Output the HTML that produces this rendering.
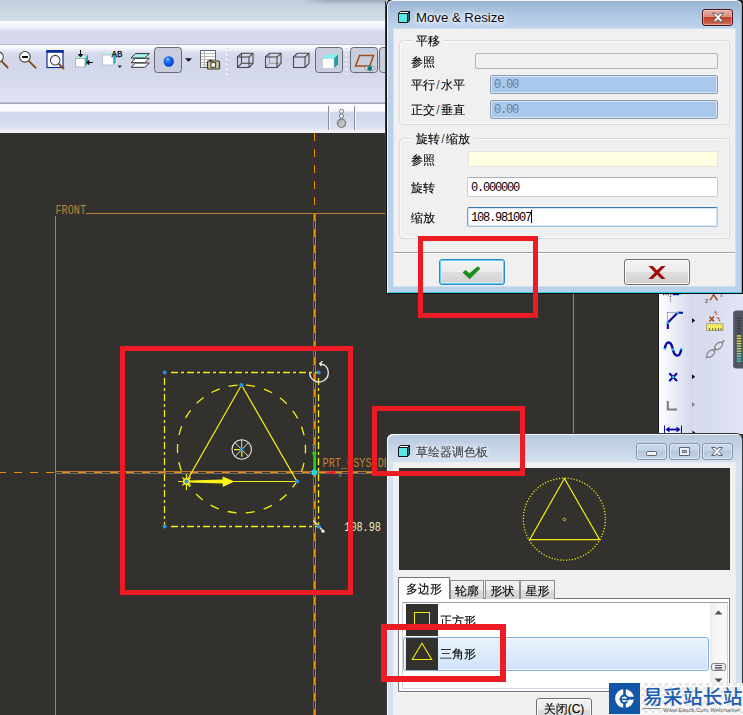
<!DOCTYPE html>
<html lang="zh-CN">
<head>
<meta charset="utf-8">
<title>Move &amp; Resize</title>
<style>
html,body{margin:0;padding:0;}
body{width:743px;height:715px;overflow:hidden;position:relative;background:#32312d;font-family:"Liberation Sans","Noto Sans CJK SC",sans-serif;font-size:12px;color:#000;}
.abs{position:absolute;}
#topbar{left:0;top:0;width:388px;height:133px;background:#d4d8eb;}
#tb0{left:0;top:0;width:388px;height:21px;background:linear-gradient(#c2cddb,#d3deea);}
#tb1{left:0;top:21px;width:388px;height:23px;background:linear-gradient(#fcfcff 0,#f3f4fb 6px,#e0e3f2 9px,#d7daed 11px,#d5d8ec 100%);}
#tb2{left:0;top:44px;width:388px;height:58px;background:linear-gradient(#b9bdcd 0,#b9bdcd 1px,#fbfbfe 1px,#fbfbfe 3px,#d9dcee 9px,#d3d7ea 14px,#d4d8eb 30px,#dfe2f2 56px,#e2e5f4 58px);}
#tb3{left:0;top:102px;width:388px;height:31px;background:linear-gradient(#b9bdcc 0,#b9bdcc 1px,#a2a6b4 1px,#a2a6b4 2px,#fbfcfe 2px,#f8f9fd 9px,#d4dbed 10.500px,#cfd7eb 12px,#d6dcee 20px,#dfe3f2 27px,#eeeef2 28px,#f0f0f3 31px);}
.lbl{position:absolute;white-space:nowrap;font-size:12px;line-height:14px;color:#000;}
</style>
</head>
<body>
<!-- top toolbars -->
<div id="topbar" class="abs"></div>
<div id="tb0" class="abs"></div>
<div id="tb1" class="abs"></div>
<div id="tb2" class="abs"></div>
<div id="tb3" class="abs"></div>
<div class="abs" style="left:300px;top:0;width:86px;height:5px;background:linear-gradient(rgba(110,120,135,.45),rgba(110,120,135,0));-webkit-mask-image:linear-gradient(90deg,transparent 0,#000 30px);mask-image:linear-gradient(90deg,transparent 0,#000 30px);"></div>
<!--TOOLBAR-ICONS-->
<svg class="abs" style="left:0;top:44px" width="388" height="90" viewBox="0 44 388 90" fill="none">
<defs>
<radialGradient id="sph" cx=".4" cy=".35" r=".7"><stop offset="0" stop-color="#5aa0ff"/><stop offset=".5" stop-color="#0a5cf0"/><stop offset="1" stop-color="#0640c0"/></radialGradient>
</defs>
<!-- pressed buttons -->
<g fill="#c9cddd" stroke="#666a78" stroke-width="1">
<rect x="154.500" y="47.500" width="27" height="25" rx="3"/>
<rect x="315.500" y="47.500" width="27" height="25" rx="3"/>
<rect x="350.500" y="47.500" width="27" height="25" rx="3"/>
<rect x="379.500" y="47.500" width="27" height="25" rx="3"/>
</g>
<!-- zoom in (partial) -->
<circle cx="-2" cy="57" r="5.300" fill="#fff" stroke="#444" stroke-width="1.100"/>
<path d="M1.800 61.300L7.600 67.500" stroke="#8a4a1a" stroke-width="1.900" stroke-linecap="round"/>
<!-- zoom out -->
<circle cx="24.900" cy="56.800" r="5.300" fill="#fff" stroke="#444" stroke-width="1.100"/>
<path d="M22 57H28" stroke="#111" stroke-width="2"/>
<path d="M29.200 61.300L35.500 67.700" stroke="#8a4a1a" stroke-width="1.900" stroke-linecap="round"/>
<!-- window zoom -->
<rect x="47" y="51" width="16" height="16.500" fill="#fff" stroke="#0a2a9a" stroke-width="1.200"/>
<rect x="46.400" y="50" width="17.200" height="2.800" fill="#0a2a9a"/>
<circle cx="55.200" cy="60.200" r="4.800" fill="#f4f6ff" stroke="#444" stroke-width="1.100"/>
<path d="M58.800 64L63.500 68.500" stroke="#8a4a1a" stroke-width="1.900" stroke-linecap="round"/>
<!-- box with arrows -->
<path d="M75.500 58.500L78.500 55H88L85 58.500Z" fill="#b4f2f2" stroke="#9aa" stroke-width=".6"/>
<path d="M85 58.500L88 55V63.500L85 67Z" fill="#22a6a6"/>
<rect x="75.500" y="58.500" width="9.500" height="8.500" fill="#fff" stroke="#aaa" stroke-width=".8"/>
<path d="M80.500 50V56M78.500 54.500L80.500 57L82.500 54.500Z" stroke="#111" stroke-width="1" fill="#111"/>
<path d="M93 62.500H87.500M89 60.500L86.500 62.500L89 64.500Z" stroke="#111" stroke-width="1" fill="#111"/>
<!-- box AB -->
<path d="M102.500 55L105 52.500H115L113 55Z" fill="#b4f2f2"/>
<path d="M113.200 55L115.500 52.500V62.500L113.200 65Z" fill="#22a6a6" stroke-dasharray="1 1"/>
<rect x="102.500" y="55" width="10.700" height="10" fill="#fff" stroke="#b0b0b8" stroke-width=".7"/>
<text x="111.600" y="56.600" font-family="'Liberation Mono',monospace" font-size="9.200" font-weight="400" fill="#000" stroke="#000" stroke-width=".25" textLength="10.800" lengthAdjust="spacingAndGlyphs">AB</text>
<path d="M117.500 65.500H122L119.700 68Z" fill="#222"/>
<!-- layers -->
<path d="M131 67.300L135.500 63H149.300L144.800 67.300Z" fill="#fff" stroke="#333" stroke-width="1"/>
<path d="M131 62.700L135.500 58.300H149.300L144.800 62.700Z" fill="#fff" stroke="#333" stroke-width="1"/>
<path d="M131 58L135.500 53.600H149.300L144.800 58Z" fill="#a4f2f2" stroke="#333" stroke-width="1"/>
<!-- sphere -->
<circle cx="168.800" cy="61.500" r="5.200" fill="url(#sph)"/>
<path d="M166.800 59.500L167.800 57.800L168.900 59.500Z" fill="#e8f2ff"/>
<path d="M185 58.200H192L188.500 61.800Z" fill="#111"/>
<!-- table + camera -->
<rect x="200.500" y="50.500" width="15" height="17" fill="#fff" stroke="#666" stroke-width="1"/>
<path d="M201 53.500H215M201 56.500H215M201 59.500H215M201 62.500H215M201 65H215M204.500 51V67" stroke="#aaa" stroke-width=".8"/>
<rect x="207.500" y="61" width="12" height="8" rx="1" fill="#c8c4a0" stroke="#3a3a20" stroke-width="1.200"/>
<rect x="209" y="59.800" width="3.500" height="1.600" fill="#3a3a20"/>
<rect x="211" y="62.700" width="4.600" height="4.600" fill="#fff" stroke="#3a3a20" stroke-width="1"/>
<!-- grips -->
<g fill="#fdfdff"><rect x="226" y="48.500" width="2" height="2"/><rect x="226" y="53.300" width="2" height="2"/><rect x="226" y="58.200" width="2" height="2"/><rect x="226" y="63" width="2" height="2"/><rect x="226" y="67.900" width="2" height="2"/><rect x="226" y="72.700" width="2" height="2"/>
<rect x="345.500" y="48.500" width="2" height="2"/><rect x="345.500" y="53.300" width="2" height="2"/><rect x="345.500" y="58.200" width="2" height="2"/><rect x="345.500" y="63" width="2" height="2"/><rect x="345.500" y="67.900" width="2" height="2"/><rect x="345.500" y="72.700" width="2" height="2"/></g>
<g fill="#a4a8b8"><rect x="227" y="48" width="1" height="1"/><rect x="227" y="52.800" width="1" height="1"/><rect x="227" y="57.700" width="1" height="1"/><rect x="227" y="62.500" width="1" height="1"/><rect x="227" y="67.400" width="1" height="1"/><rect x="227" y="72.200" width="1" height="1"/>
<rect x="346.500" y="48" width="1" height="1"/><rect x="346.500" y="52.800" width="1" height="1"/><rect x="346.500" y="57.700" width="1" height="1"/><rect x="346.500" y="62.500" width="1" height="1"/><rect x="346.500" y="67.400" width="1" height="1"/><rect x="346.500" y="72.200" width="1" height="1"/></g>
<!-- wireframe cube -->
<g stroke="#4a4a4a" stroke-width="1.100">
<rect x="237.500" y="57" width="11.500" height="10.500"/><rect x="241.500" y="53.300" width="11.500" height="10"/>
<path d="M237.500 57L241.500 53.300M249 57L253 53.300M237.500 67.500L241.500 63.300M249 67.500L253 63.300"/>
</g>
<!-- hidden-line cube -->
<g stroke="#a89c90" stroke-width="1"><path d="M269.500 53.500V63.300H281M265.500 67.500L269.500 63.300"/></g>
<g stroke="#4a4a4a" stroke-width="1.100">
<rect x="265.500" y="57" width="11.500" height="10.500"/>
<path d="M265.500 57L269.500 53.300H281V63.300L277 67.500M277 57L281 53.300"/>
</g>
<!-- no-hidden cube -->
<g stroke="#4a4a4a" stroke-width="1.100">
<rect x="293.500" y="57" width="11.500" height="10.500"/>
<path d="M293.500 57L297.500 53.300H309V63.300L305 67.500M305 57L309 53.300"/>
</g>
<!-- shaded cube -->
<path d="M322.500 58.500L326.500 54.500H338L334 58.500Z" fill="#7ef4f4"/>
<path d="M334 58.500L338 54.500V64.300L334 68.300Z" fill="#1f9e9e"/>
<rect x="322.500" y="58.500" width="11.500" height="9.800" fill="#fff" stroke="#b8bcc8" stroke-width=".6"/>
<!-- datum plane + eye -->
<path d="M359.600 55.500H373.500L369.800 66H355.500Z" stroke="#a24c12" stroke-width="1.500" stroke-linejoin="miter"/>
<path d="M364.500 68.300C367 65 372.500 65 375 68.300C372.500 71.500 367 71.500 364.500 68.300Z" fill="#f4f4f4" stroke="#555" stroke-width=".6"/>
<circle cx="369.800" cy="68.300" r="2.500" fill="#149090"/><circle cx="369.800" cy="68.300" r="1" fill="#0a3a3a"/>
<!-- status bar -->
<path d="M328.500 106V130M354.500 106V130" stroke="#8e8e96" stroke-width="1"/>
<path d="M329.500 106V130M355.500 106V130" stroke="#f4f5fa" stroke-width="1"/>
<g stroke="#7c7c7c" stroke-width="1"><circle cx="341.500" cy="111.300" r="2.100" fill="#eef0f8"/><circle cx="341.500" cy="116" r="2.100" fill="#eef0f8"/><circle cx="341.500" cy="123.200" r="4.100" fill="#b4b4b8" stroke-width="1.300"/><path d="M339 125.700L344 120.700M340.500 127L345 122.300" stroke="#e8e8ee" stroke-width=".7"/></g>
</svg>
<!--/TOOLBAR-ICONS-->
<!--CANVAS-->
<svg class="abs" style="left:0;top:0" width="743" height="715" viewBox="0 0 743 715">
<g shape-rendering="crispEdges" fill="none">
  <!-- FRONT datum plane outline -->
  <line x1="86" y1="213.5" x2="386" y2="213.5" stroke="#bd7d33" stroke-width="1"/>
  <line x1="55.5" y1="216" x2="55.5" y2="715" stroke="#bd7d33" stroke-width="1"/>
  <line x1="573.5" y1="293" x2="573.5" y2="433" stroke="#bd7d33" stroke-width="1"/>
  <!-- vertical centre axis -->
  <line x1="313.5" y1="213" x2="313.5" y2="715" stroke="#6c6c6a" stroke-width="1"/>
  <line x1="315.5" y1="213" x2="315.5" y2="715" stroke="#b97a30" stroke-width="1"/>
  <line x1="314.5" y1="133" x2="314.5" y2="715" stroke="#f28c05" stroke-width="1.6" stroke-dasharray="8 8"/>
  <!-- horizontal centre axis -->
  <line x1="55" y1="471.5" x2="400" y2="471.5" stroke="#b97a30" stroke-width="1"/>
  <line x1="55" y1="473.5" x2="400" y2="473.5" stroke="#6c6c6a" stroke-width="1"/>
  <line x1="-2" y1="472.5" x2="400" y2="472.5" stroke="#f28c05" stroke-width="1.6" stroke-dasharray="8 8"/>
</g>
<!-- sketch entities -->
<g fill="none" stroke="#f4ee10" stroke-width="1.3">
  <path d="M171 372.5H319" stroke-dasharray="7 3 3 3"/>
  <path d="M164.5 378V526" stroke-dasharray="7 3 3 3"/>
  <path d="M171 526.5H319" stroke-dasharray="7 3 3 3"/>
  <path d="M318.5 378V526" stroke-dasharray="7 3 3 3"/>
  <circle cx="241.5" cy="449" r="64" stroke-dasharray="9 9.28" stroke-dashoffset="-4.6" transform="rotate(-90 241.5 449)"/>
  <path d="M241.5 385L186.5 481.5H297L241.5 385Z" stroke-width="1.2"/>
</g>
<!-- direction arrow -->
<path d="M188 480.500L222.700 479.400V476.500L234.500 481.600L222.700 487V483.600L188 482.600Z" fill="#fbf315"/>
<!-- sun marker -->
<g stroke="#f4ee10" stroke-width="1.2" fill="none">
  <path d="M178 481.500H193M186.500 474V490M182.300 477.300L190.700 485.700M190.700 477.300L182.300 485.700"/>
</g>
<circle cx="186.5" cy="481.5" r="3.6" fill="#f6f012"/>
<!-- centre marker -->
<g stroke="#e8e8e8" stroke-width="1.1" fill="none">
  <circle cx="241.7" cy="449.5" r="9.7"/>
  <path d="M235 442.700L248.500 456.500M248.500 442.700L235 456.500M241.700 440V449" stroke-width=".9"/>
</g>
<path d="M234 449.600H241.500M241.800 450V456.800" stroke="#f4ee10" stroke-width="1.300"/>
<!-- rotate handle -->
<path d="M309.700 373A9.300 9.300 0 1 0 324 364.800L320 363.800M322.600 361.300L319.700 363.700L321.400 366" stroke="#eeeeee" stroke-width="1.300" fill="none"/>
<!-- scale handle -->
<path d="M313.5 520.5L323 531" stroke="#e6e6e6" stroke-width="1.4"/>
<circle cx="323" cy="531.2" r="1.6" fill="#f0f0f0"/>
<!-- csys -->
<path d="M314.5 472V454" stroke="#22d022" stroke-width="1.4"/>
<circle cx="314.3" cy="453.3" r="2" fill="#22d022"/>
<path d="M326 472.400H333" stroke="#ee1c24" stroke-width="1.600"/>
<circle cx="333.4" cy="472.5" r="2" fill="#ee1c24"/>
<circle cx="314.400" cy="472.400" r="3" fill="#20d8e8"/>
<!-- vertex dots -->
<g fill="#2b8fe0">
  <circle cx="164.7" cy="372.6" r="2"/><circle cx="318.7" cy="372.6" r="2"/>
  <circle cx="164.7" cy="526.4" r="2"/><circle cx="318.7" cy="526.4" r="2"/>
  <circle cx="241.5" cy="385.2" r="2.1"/><circle cx="297.2" cy="481.5" r="2.1"/>
  <circle cx="186.5" cy="481.5" r="2"/><circle cx="241.7" cy="449.5" r="1.7"/>
</g>
<!-- labels -->
<g font-family="'Liberation Mono',monospace" fill="#c08438">
  <text x="55.500" y="214" font-size="13.600" textLength="30.500" lengthAdjust="spacingAndGlyphs" font-weight="400">FRONT</text>
  <text x="322.500" y="467" font-size="13.600" textLength="67.500" lengthAdjust="spacingAndGlyphs">PRT_CSYS_DE</text>
  <text x="344.300" y="531" font-size="13.600" textLength="36.500" lengthAdjust="spacingAndGlyphs" fill="#f0f0c0">108.98</text>
  <text x="338" y="477" font-size="7" fill="#8a8a88">x</text>
  <text x="312" y="448" font-size="7" fill="#8a8a88">y</text>
</g>
</svg>
<!--/CANVAS-->
<!--RIGHTBAR-->
<div class="win" style="left:658px;top:293px;width:1px;height:141px;background:#15171a;"></div>
<div class="win" style="left:659px;top:293px;width:84px;height:141px;background:linear-gradient(90deg,#ffffff 0,#f0f2fa 12px,#dde0f1 26px,#d3d7ec 33px,#d9dcef 34px,#d8dcef 50px,#e2e5f5 84px);"></div>
<svg class="abs" style="left:659px;top:293px" width="84" height="141" viewBox="659 293 84 141" fill="none">
<!-- partially hidden top icons -->
<path d="M663 294.500H672" stroke="#555" stroke-width="1.400" stroke-dasharray="1.200 1.200"/><path d="M670.500 296V301.500" stroke="#555" stroke-width="1.400" stroke-dasharray="1.200 1.200"/><path d="M672.700 294.200H679" stroke="#0a0aa0" stroke-width="2"/><path d="M679 294.200H680.800" stroke="#20e0f8" stroke-width="2"/>
<path d="M710 300.500L713.600 294.500L717.500 300.500" stroke="#a04810" stroke-width="1.400"/>
<text x="704.800" y="302.600" font-family="'Liberation Sans',sans-serif" font-size="7.500" fill="#555" stroke="none">z</text>
<text x="720" y="297" font-family="'Liberation Sans',sans-serif" font-size="6" fill="#666" stroke="none">x</text>
<!-- arc tool -->
<path d="M667.500 312.500H677M667.500 312.500V322" stroke="#666" stroke-width="1" stroke-dasharray="1 1"/>
<path d="M683 312.800H677.600L667.800 322.800V329" stroke="#0a0aa0" stroke-width="2.100" stroke-linejoin="miter"/>
<rect x="676.600" y="311.800" width="2" height="2" fill="#20e0f8"/><rect x="666.800" y="321.800" width="2" height="2" fill="#20e0f8"/>
<path d="M692 318L695.200 320.500L692 323Z" fill="#111"/>
<!-- spline tool -->
<path d="M664.800 349C666 340.300 671 340.300 672.800 349C674.600 357.800 680 357.800 681.300 348.800" stroke="#0a0aa0" stroke-width="2.400"/>
<rect x="663.800" y="348" width="2" height="2" fill="#20e0f8"/><rect x="671.800" y="348.500" width="2" height="2" fill="#20e0f8"/><rect x="680.300" y="347.800" width="2" height="2" fill="#20e0f8"/>
<!-- point tool -->
<path d="M669.300 373.300L677 381M677 373.300L669.300 381" stroke="#0a0aa0" stroke-width="2.200"/>
<rect x="672.100" y="376.100" width="2.200" height="2.200" fill="#20e0f8"/>
<path d="M692 374.300L695.200 376.800L692 379.300Z" fill="#111"/>
<!-- L tool -->
<path d="M667.800 401V409.500H677" stroke="#7c7c7c" stroke-width="2"/>
<path d="M692 402L695.200 404.500L692 407Z" fill="#8a8a8a"/>
<!-- dimension tool -->
<path d="M664.500 425.500V434M681.500 425.500V434" stroke="#0a0aa0" stroke-width="1"/>
<path d="M667 429.500H679" stroke="#0a0aa0" stroke-width="1.800"/><path d="M665.500 429.500L669.500 426.500V432.500ZM680.500 429.500L676.500 426.500V432.500Z" fill="#0a0aa0"/>
<path d="M692.500 430.500L695.500 433L692.500 435.500Z" fill="#111"/>
<!-- col 2 -->
<path d="M709.500 316.500L714 321.500M714 316.500L709.500 321.500" stroke="#a04810" stroke-width="1.500"/>
<path d="M715 311.500L716.800 314.500M717.800 317.500L719.800 320.800" stroke="#a04810" stroke-width="1.700" stroke-dasharray="1.600 1"/>
<rect x="706.500" y="323.800" width="16.500" height="6.700" fill="#ece450" stroke="#8a8a80" stroke-width=".7"/><path d="M707 325H723M707 327H723" stroke="#fcfab0" stroke-width="1" stroke-dasharray="1 1"/><path d="M709.500 328V330.500M712.500 328V330.500M715.500 328V330.500M718.500 328V330.500M721 328V330.500" stroke="#555" stroke-width=".8"/>
<g stroke="#858585" stroke-width="1.100"><ellipse cx="710.800" cy="353.500" rx="4.600" ry="2.700" transform="rotate(-42 710.800 353.500)"/><ellipse cx="718.500" cy="346" rx="4.600" ry="2.700" transform="rotate(-42 718.500 346)"/><path d="M713 351.200L716.300 348.200M705.800 358.200L707.800 356.300M721.600 343L724.300 340.300" stroke-width="1.600"/></g>
<!-- meter -->
<rect x="733" y="310.500" width="14" height="58" rx="3.500" fill="#50555f"/>
<path d="M733.500 314V365" stroke="#6d727c" stroke-width="1"/>
<rect x="736.800" y="317.6" width="4.400" height="1.300" fill="#3a3e46"/><rect x="736.800" y="320.1" width="4.400" height="1.300" fill="#3a3e46"/><rect x="736.800" y="322.7" width="4.400" height="1.300" fill="#3a3e46"/><rect x="736.800" y="325.2" width="4.400" height="1.300" fill="#3a3e46"/><rect x="736.800" y="327.7" width="4.400" height="1.300" fill="#3a3e46"/><rect x="736.800" y="330.2" width="4.400" height="1.300" fill="#3a3e46"/><rect x="736.800" y="332.8" width="4.400" height="1.300" fill="#3a3e46"/><rect x="736.800" y="335.3" width="4.400" height="1.300" fill="#e4da50"/><rect x="736.800" y="337.8" width="4.400" height="1.300" fill="#e4da50"/><rect x="736.800" y="340.4" width="4.400" height="1.300" fill="#e4da50"/><rect x="736.800" y="342.9" width="4.400" height="1.300" fill="#e4da50"/><rect x="736.800" y="345.4" width="4.400" height="1.300" fill="#b4dc70"/><rect x="736.800" y="348.0" width="4.400" height="1.300" fill="#b4dc70"/><rect x="736.800" y="350.5" width="4.400" height="1.300" fill="#b4dc70"/><rect x="736.800" y="353.0" width="4.400" height="1.300" fill="#70dca0"/><rect x="736.800" y="355.6" width="4.400" height="1.300" fill="#70dca0"/><rect x="736.800" y="358.1" width="4.400" height="1.300" fill="#38d8c8"/><rect x="736.800" y="360.6" width="4.400" height="1.300" fill="#38d8c8"/>
</svg>
<!--/RIGHTBAR-->
<!--DIALOG1-->
<style>
.win{position:absolute;box-sizing:border-box;}
.cjk{font-family:"Liberation Sans","WenQuanYi Zen Hei","Noto Sans CJK SC",sans-serif;-webkit-text-stroke:.12px currentColor;}
.mono{font-family:"Liberation Mono",monospace;letter-spacing:-1.2px;font-size:12px;}
.grp{position:absolute;box-sizing:border-box;border:1px solid #d3dde6;border-radius:4px;box-shadow:inset 0 0 0 1px #fbfbfb;}
.grp>span{position:absolute;top:-7px;left:12px;background:#f0f0f0;padding:0 4px;line-height:14px;font-size:12px;}
i{font-style:normal;display:inline-block;width:6px;text-align:center;color:#555;}
.fld{position:absolute;box-sizing:border-box;height:19px;line-height:18px;padding-left:3px;white-space:nowrap;}
.btn{position:absolute;box-sizing:border-box;border:1px solid #707070;border-radius:3px;background:linear-gradient(#f3f3f3 0,#ececec 48%,#dedede 52%,#d0d0d0 100%);box-shadow:inset 0 0 0 1px #fafafa;}
</style>
<div class="win" style="left:385px;top:1px;width:1px;height:292px;background:#3c3c3b;"></div>
<div id="dlg1" class="win" style="left:386px;top:-1px;width:357px;height:295px;background:#0c0e12;border-radius:7px 7px 0 0;"></div>
<div class="win" style="left:387px;top:0;width:355px;height:293px;border-radius:6px 6px 0 0;background:#f4f8fc;"></div>
<div class="win" style="left:741px;top:4px;width:1px;height:289px;background:#3ccbe2;"></div>
<div class="win" style="left:388px;top:292px;width:354px;height:1px;background:#3ccbe2;"></div>
<div class="win" style="left:388px;top:1px;width:353px;height:291px;border-radius:5px 5px 0 0;background:linear-gradient(#9ab3d0 0,#a6bfdc 8px,#b2cbe6 18px,#bed5ed 27px,#b9d1ea 40px,#b9d1ea 100%);"></div>
<!-- title -->
<svg class="abs" style="left:397px;top:10px" width="14" height="14" viewBox="0 0 14 14"><path d="M1.500 3.500H10.500V12.500H1.500Z" fill="#58e8e6" stroke="#151515" stroke-width="1" stroke-linejoin="round"/><path d="M1.500 3.500L3.300 1.500H12.500L10.500 3.500Z" fill="#f4fcfc" stroke="#151515" stroke-width="1" stroke-linejoin="round"/><path d="M10.500 3.500L12.500 1.500V10.700L10.500 12.500Z" fill="#2c6a6a" stroke="#151515" stroke-width="1" stroke-linejoin="round"/></svg>
<div class="lbl" style="left:416px;top:10px;font-size:13.200px;line-height:16px;color:#0a0a14;text-shadow:0 0 5px #fff,0 0 8px #fff,0 0 3px #fff;">Move &amp; Resize</div>
<!-- close button -->
<div class="win" style="left:702px;top:9px;width:31px;height:17px;border:1px solid #47121a;border-radius:3px;background:linear-gradient(#e9b0a4 0,#dc8a7c 45%,#c2432c 50%,#cc5c40 85%,#d87c60 100%);box-shadow:inset 0 0 0 1px rgba(255,255,255,.35);"></div>
<svg class="abs" style="left:711px;top:12px" width="14" height="11" viewBox="0 0 14 11"><path d="M1.500 1.200H4.800L7 3.600L9.200 1.200H12.500L8.800 5.500L12.500 9.800H9.200L7 7.400L4.800 9.800H1.500L5.200 5.500Z" fill="#fafafa" stroke="#5a5a66" stroke-width="1" stroke-linejoin="round"/></svg>
<!-- client -->
<div class="win cjk" id="cl1" style="left:394px;top:29px;width:341px;height:257px;background:#f0f0f0;box-shadow:0 0 0 1px #cfe0f1;"></div>
<div class="grp cjk" style="left:399px;top:40px;width:331px;height:85px;"><span>平移</span></div>
<div class="grp cjk" style="left:399px;top:138px;width:331px;height:101px;"><span>旋转<i>/</i>缩放</span></div>
<div class="lbl cjk" style="left:411px;top:55px;">参照</div>
<div class="lbl cjk" style="left:411px;top:78px;">平行<i>/</i>水平</div>
<div class="lbl cjk" style="left:411px;top:103px;">正交<i>/</i>垂直</div>
<div class="lbl cjk" style="left:411px;top:153px;">参照</div>
<div class="lbl cjk" style="left:411px;top:181px;">旋转</div>
<div class="lbl cjk" style="left:411px;top:211px;">缩放</div>
<div class="fld" style="left:475px;top:53px;width:243px;height:16px;background:#f0f0f0;border:1px solid #b4b4b4;border-radius:2px;"></div>
<div class="fld mono" style="left:490px;top:75px;width:228px;background:#a9c8ec;border:1px solid #8e9fb4;border-radius:2px;box-shadow:inset 0 0 0 1px #d6e4f4;color:#6a7f96;">0.00</div>
<div class="fld mono" style="left:490px;top:100px;width:228px;background:#a9c8ec;border:1px solid #8e9fb4;border-radius:2px;box-shadow:inset 0 0 0 1px #d6e4f4;color:#6a7f96;">0.00</div>
<div class="fld" style="left:468px;top:151px;width:250px;height:16px;background:#ffffe1;border:1px solid #e6e6dc;"></div>
<div class="fld mono" style="left:467px;top:177px;width:251px;height:20px;line-height:21px;background:#fff;border:1px solid #c9ccd2;border-top-color:#abadb3;border-radius:2px;">0.000000</div>
<div class="fld mono" style="left:467px;top:207px;width:251px;height:20px;line-height:21px;background:#fff;border:1px solid #a4c4e4;border-top-color:#3d7bad;border-left-color:#6f9fcb;border-radius:2px;box-shadow:inset 0 0 0 1px #d5e6f6;">108.981007<span style="display:inline-block;width:1px;height:13px;background:#000;vertical-align:-2px;margin-left:0"></span></div>
<div class="win" style="left:394px;top:252px;width:341px;height:2px;background:linear-gradient(#a0a0a0 0,#a0a0a0 50%,#fff 50%);"></div>
<div class="btn" style="left:439px;top:259px;width:66px;height:26px;border-color:#2f86c4;box-shadow:inset 0 0 0 1px #5fd4f6,inset 0 0 0 2px rgba(240,250,255,.45);"></div>
<div class="btn" style="left:624px;top:259px;width:66px;height:26px;"></div>
<svg class="abs" style="left:462px;top:266px" width="19" height="14" viewBox="0 0 19 14"><path d="M1 6.500L3.800 4.300L7.300 7.800L15.800 0.800L18 2.600L7.600 12.800Z" fill="#129412" stroke="#0a6a0a" stroke-width=".6"/></svg>
<svg class="abs" style="left:647px;top:265px" width="20" height="15" viewBox="0 0 20 15"><path d="M1.500 1H5.800L10 5.200L14.300 1H18.600L12.200 7.500L18.600 14H14.300L10 9.800L5.800 14H1.500L7.800 7.500Z" fill="#a00c0c"/></svg>
<!--/DIALOG1-->
<!--DIALOG2-->
<style>
.cbtn{position:absolute;box-sizing:border-box;top:443px;height:17px;border:1px solid #8797ab;border-radius:3px;background:linear-gradient(#cbd9ea 0,#c3d2e5 45%,#b7c8de 50%,#c3d3e7 100%);box-shadow:inset 0 0 0 1px rgba(255,255,255,.45);}
.tab{position:absolute;box-sizing:border-box;top:580px;height:19px;border:1px solid #8b8e96;border-bottom:none;background:linear-gradient(#f3f3f3 0,#ececec 50%,#dcdcdc 52%,#d2d2d2 100%);font-size:12px;line-height:20px;text-align:center;white-space:nowrap;}
</style>
<div class="win" style="left:386px;top:433px;width:357px;height:290px;border-radius:7px 7px 0 0;background:#35373b;"></div>
<div class="win" style="left:387px;top:434px;width:355px;height:290px;border-radius:6px 6px 0 0;background:linear-gradient(#b9c9dd 0,#c4d3e6 12px,#d0dded 24px,#d7e3f1 30px,#d3e0f0 60px,#d3e0f0 100%);box-shadow:inset 1px 1px 0 #f2f6fb;"></div>
<svg class="abs" style="left:397px;top:444px" width="14" height="14" viewBox="0 0 14 14"><path d="M1.500 3.500H10.500V12.500H1.500Z" fill="#58e8e6" stroke="#151515" stroke-width="1" stroke-linejoin="round"/><path d="M1.500 3.500L3.300 1.500H12.500L10.500 3.500Z" fill="#f4fcfc" stroke="#151515" stroke-width="1" stroke-linejoin="round"/><path d="M10.500 3.500L12.500 1.500V10.700L10.500 12.500Z" fill="#2c6a6a" stroke="#151515" stroke-width="1" stroke-linejoin="round"/></svg>
<div class="lbl cjk" style="left:416px;top:444px;font-size:12px;line-height:16px;color:#39404a;text-shadow:0 0 4px #fff,0 0 6px #fff;">草绘器调色板</div>
<div class="cbtn" style="left:636px;width:31px;"></div>
<div class="cbtn" style="left:669px;width:31px;"></div>
<div class="cbtn" style="left:702px;width:31px;"></div>
<svg class="abs" style="left:636px;top:443px" width="97" height="17" viewBox="0 0 97 17" fill="#f0f2f5" stroke="#5d6672" stroke-width="1">
<rect x="10.500" y="8.500" width="10" height="4" rx=".8"/>
<path d="M43.500 4.500H53.500V12.500H43.500ZM46.500 7.500V9.500H50.500V7.500Z" fill-rule="evenodd"/>
<path d="M75.500 4.500H79.400L81 6.400L82.600 4.500H86.500L83 8.500L86.500 12.500H82.600L81 10.600L79.400 12.500H75.500L79 8.500Z" stroke-linejoin="round"/>
</svg>
<!-- client -->
<div class="win" style="left:394px;top:463px;width:341px;height:260px;background:#f0f0f0;box-shadow:0 0 0 1px #e6edf6;"></div>
<div class="win" style="left:399px;top:468px;width:331px;height:102px;background:#32312d;"></div>
<svg class="abs" style="left:399px;top:468px" width="331" height="102" viewBox="399 468 331 102" fill="none" stroke="#f2ec10">
<circle cx="564.4" cy="519.2" r="41" stroke-width="1.3" stroke-dasharray="1.200 1.727"/>
<path d="M564.4 478.500L529.700 539.600H599.600Z" stroke-width="1.2"/>
<path d="M564.400 517.700L566 519.400L564.400 521.100L562.800 519.400Z" stroke-width=".8"/>
</svg>
<!-- tabs -->
<div class="win" style="left:398px;top:598px;width:332px;height:94px;background:#fff;border:1px solid #70747c;box-shadow:0 1px 0 #fbfbfb;"></div>
<div class="tab cjk" style="left:450px;width:34px;">轮廓</div>
<div class="tab cjk" style="left:485px;width:35px;">形状</div>
<div class="tab cjk" style="left:520px;width:35px;">星形</div>
<div class="tab cjk" style="left:398px;top:577px;width:52px;height:22px;background:#fdfdfd;line-height:23px;border-color:#70747c;">多边形</div>
<!-- list -->
<div class="win" style="left:402px;top:602px;width:326px;height:87px;background:#fff;border:1px solid #cdd6e2;border-top-color:#9a9ea8;"></div>
<div class="win" style="left:710px;top:603px;width:17px;height:85px;background:linear-gradient(90deg,#ededed,#f6f6f6 40%,#f8f8f8);"></div>
<svg class="abs" style="left:710px;top:603px" width="17" height="85" viewBox="0 0 17 85"><path d="M4.500 11.500L8.500 7.500L12.500 11.500Z" fill="#4a4e58"/><path d="M4.500 75.500L8.500 79.500L12.500 75.500Z" fill="#4a4e58"/><rect x="1.500" y="60.500" width="14" height="7" rx="2" fill="#ededed" stroke="#7c8088"/><path d="M5 62.500H12M5 64.500H12M5 66H12" stroke="#555a66" stroke-width="1"/></svg>
<div class="win" style="left:406px;top:604px;width:32px;height:32px;background:#32312d;"></div>
<div class="win" style="left:414px;top:612px;width:16px;height:17px;border:1px solid #f2ec10;"></div>
<div class="lbl cjk" style="left:440px;top:614px;">正方形</div>
<div class="win" style="left:403px;top:637px;width:306px;height:34px;border:1px solid #84acdd;border-radius:3px;background:linear-gradient(#eaf3fd 0,#dbeafc 60%,#cfe2fa 100%);box-shadow:inset 0 0 0 1px #f2f8fe;"></div>
<div class="win" style="left:406px;top:638px;width:32px;height:32px;background:#32312d;"></div>
<svg class="abs" style="left:406px;top:638px" width="32" height="32" viewBox="0 0 32 32"><path d="M16 5.300L6.200 21.500H25.700Z" fill="none" stroke="#f2ec10" stroke-width="1.1"/></svg>
<div class="lbl cjk" style="left:440px;top:647px;">三角形</div>
<!-- close button -->
<div class="btn cjk" style="left:536px;top:698px;width:56px;height:24px;border-color:#707070;text-align:center;line-height:20px;font-size:12px;">关闭(C)</div>
<!--/DIALOG2-->
<!--WATERMARK-->
<div class="win" style="left:609px;top:683px;width:31px;height:31px;background:#1257a7;"></div>
<div class="win" style="left:609px;top:714px;width:31px;height:1px;background:#dfe6f0;"></div>
<div class="win" style="left:640px;top:683px;width:103px;height:32px;background:repeating-conic-gradient(#e6e6e6 0 25%,#fdfdfd 0 50%) 1px 0/6.870px 6.870px;"></div>
<svg class="abs" style="left:609px;top:683px" width="31" height="32" viewBox="0 0 31 32"><circle cx="15.500" cy="15.500" r="9.400" fill="#fbfbfb"/><rect x="14.200" y="5" width="2.600" height="21" fill="#1257a7"/><circle cx="15.300" cy="16.300" r="4.700" fill="#1257a7"/><circle cx="15.300" cy="16.300" r="2.700" fill="#fbfbfb"/><rect x="12" y="15.700" width="7.500" height="1.500" fill="#1257a7"/><path d="M17.600 17.400H20.500V19L18.600 19.200Z" fill="#fbfbfb"/><rect x="19" y="13.800" width="6.500" height="2.800" fill="#1257a7"/></svg>
<div class="lbl" style="left:643px;top:684.500px;font-family:'Liberation Sans','Noto Sans CJK SC',sans-serif;font-weight:500;font-size:19.600px;line-height:24px;letter-spacing:0.350px;color:#1b5db2;">易采站长站</div>
<div class="win" style="left:643px;top:708px;width:18px;height:1px;background:#8a8a8a;"></div>
<div class="lbl" style="left:663px;top:704.5px;font-size:5.9px;line-height:10px;color:#666;letter-spacing:0;">Www.Easck.Com <em>Webmaster</em></div>
<!--/WATERMARK-->
<!--REDBOXES-->
<svg class="abs" style="left:0;top:0;pointer-events:none" width="743" height="715" viewBox="0 0 743 715" fill="none" stroke="#ed1c24" shape-rendering="crispEdges">
<rect x="420.500" y="238.500" width="115" height="76.500" stroke-width="5"/>
<rect x="122.500" y="348.500" width="228" height="244" stroke-width="5"/>
<rect x="374.800" y="408.600" width="148" height="64.800" stroke-width="4.600"/>
<rect x="384" y="627" width="119.200" height="52.300" stroke-width="5.600"/>
</svg>
<!--/REDBOXES-->
</body>
</html>
